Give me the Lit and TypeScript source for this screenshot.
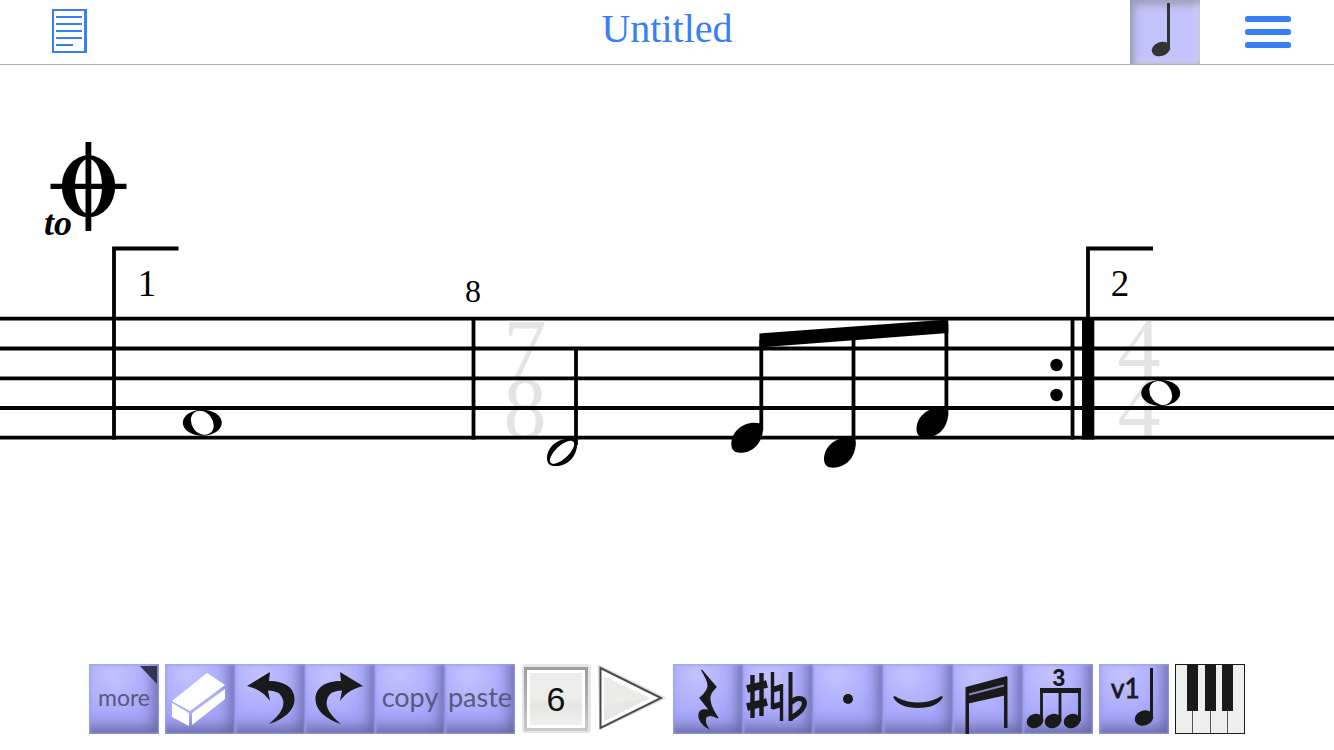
import { LitElement, html, svg, css } from "lit";
import { customElement } from "lit/decorators.js";

const HEAD = "M0 21C0 10 10 0 23 0C27 0 30 .6 31.5 3C33 16 24 30 9 30C3 30 0 27 0 21Z";
const ARROW = "M12 22L35 8L34 17C50 17 60 24 59.5 36C59 46 50 55 34 60C45 51 50 43 48 36C46 29 42 27 33 26.5L35 37C30 30 24 25 12 22Z";

const erase = svg`
  <g fill="#fff">
    <path d="M42 9L60 21L25 47L7 37Z"/>
    <path d="M7 39L24 49V62L7 53Z"/>
    <path d="M27 49L60 25V35L27 61Z"/>
  </g>`;
const undo = svg`<path d=${ARROW}/>`;
const redo = svg`<path transform="translate(70 0) scale(-1 1)" d=${ARROW}/>`;
const rest = svg`<path stroke="#1a1a1a" stroke-width="1.2" d="M28.5 6L43 23C38 28 36 31 37 37C38 42 40 47 45 54C40 51 36 50 33 53C31 57 33 61 35 64C29 61 25 55 26 50C27 45 33 45 37 47L27 34C33 29 36 25 35 20C34 15 31 10 28.5 6Z"/>`;
const accidentals = svg`
  <g fill="none" stroke="#1a1a1a">
    <path stroke-width="4.4" d="M9.5 11V54M18.5 9V52"/>
    <path stroke-width="7.5" d="M4 25L24 20M4 43L24 38"/>
    <path stroke-width="3.4" d="M29.5 8V45M38.5 20V57"/>
    <path stroke-width="6" d="M29 26L39 23M29 43L39 40"/>
    <path stroke-width="4" d="M47.5 8V57"/>
    <path stroke-width="5" d="M48 39C53 33 61 33 61.5 39C61.5 45 55 50 48 54"/>
  </g>`;
const dot = svg`<circle cx="35" cy="35" r="5"/>`;
const slur = svg`<path d="M10 33Q12 31 15 34Q35 43 55 34Q58 31 60 33Q54 44 35 44Q16 44 10 33Z"/>`;
const beams = svg`
  <path d="M13 23L54 12V31L13 40Z"/>
  <path d="M16 30.5L51 21.500" stroke="#8686b4" stroke-width="2"/>
  <path d="M12.5 23H16V70H12.5ZM51 13H54.5V64H51Z"/>`;
const triplet = svg`
  <text x="36" y="22" text-anchor="middle" class="three">3</text>
  <path d="M17 24H58V29H17Z"/>
  <path d="M18.5 26V57M37 26V57M56.5 26V57" stroke="#1a1a1a" stroke-width="2.8"/>
  <ellipse cx="12" cy="57" rx="8.5" ry="7" transform="rotate(-20 12 57)"/>
  <ellipse cx="30" cy="57" rx="8.5" ry="7" transform="rotate(-20 30 57)"/>
  <ellipse cx="49" cy="57" rx="8.5" ry="7" transform="rotate(-20 49 57)"/>`;
const voice = svg`
  <text x="12" y="34" class="voice">v1</text>
  <path d="M51 4H54V54H51Z"/>
  <ellipse cx="45" cy="54" rx="9.500" ry="7.500" transform="rotate(-20 45 54)"/>`;

const icon = (shape: unknown) =>
  html`<svg viewBox="0 0 70 70" fill="#1a1a1a" aria-hidden="true">${shape}</svg>`;

const tile = (label: string, shape: unknown) =>
  html`<button class="tile" aria-label=${label}>${icon(shape)}</button>`;

@customElement("score-sheet")
export class ScoreSheet extends LitElement {
  static styles = css`
    :host { display: block; }
    svg { display: block; width: 100%; height: auto; }
    text { font-family: "Liberation Serif", serif; fill: #000; }
    .meter { font-size: 86px; fill: #e4e4e4; text-anchor: middle; }
    .ending { font-size: 37px; text-anchor: middle; }
    .bar { font-size: 32px; text-anchor: middle; }
    .to { font-size: 36px; font-weight: bold; font-style: italic; }
    .line { fill: none; stroke: #000; stroke-width: 3.8; }
  `;

  private whole(x: number, y: number) {
    return svg`<g transform="translate(${x} ${y})">
      <ellipse rx="19.5" ry="13"/>
      <ellipse rx="13" ry="10.3" fill="#fff" transform="rotate(52)"/>
    </g>`;
  }

  render() {
    return html`<svg viewBox="0 65 1334 583" role="img" aria-label="Score">
      <text class="meter" x="525" y="379">7</text>
      <text class="meter" x="525" y="437">8</text>
      <text class="meter" x="1139" y="378">4</text>
      <text class="meter" x="1139" y="437">4</text>

      <ellipse cx="88.5" cy="186.3" rx="26.7" ry="31"/>
      <ellipse cx="88.5" cy="186.3" rx="13.5" ry="27.5" fill="#fff"/>
      <path d="M85.5 142H91.3V231H85.5ZM50.5 183.7H126.5V189H50.5Z"/>
      <text class="to" x="44" y="235">to</text>

      <path class="line" d="M0 318.7H1334M0 348.5H1334M0 378.3H1334M0 408H1334M0 437.7H1334"/>
      <path class="line" d="M114 439.5V248.5H178.5M1088 320V248.5H1153M473.5 319V439.5M1072.5 319V439.5"/>
      <path d="M1082 319H1094.3V439.5H1082Z"/>
      <circle cx="1056.5" cy="365" r="6.2"/>
      <circle cx="1056.5" cy="395" r="6.2"/>
      <text class="ending" x="147" y="296">1</text>
      <text class="ending" x="1120" y="296">2</text>
      <text class="bar" x="473" y="302">8</text>

      ${this.whole(202.3, 422.8)}
      ${this.whole(1160.7, 393)}

      <path class="line" d="M576 349V445"/>
      <path transform="translate(547 438.8) scale(.95 .91)" d=${HEAD}/>
      <ellipse cx="562" cy="452.3" rx="15.5" ry="6.4" fill="#fff" transform="rotate(-43 562 452.3)"/>

      <path class="line" d="M761.3 340V430M853.5 335V446M946.4 325V416"/>
      <path d="M759.4 333.5L948.3 319.5V333L759.4 347.5Z"/>
      <path transform="translate(731.3 422.8)" d=${HEAD}/>
      <path transform="translate(824 437.8)" d=${HEAD}/>
      <path transform="translate(916.5 407.8)" d=${HEAD}/>
    </svg>`;
  }
}

@customElement("app-root")
export class AppRoot extends LitElement {
  static styles = css`
    :host {
      display: flex;
      flex-direction: column;
      min-height: 100vh;
      background: #fff;
      overflow: hidden;
      font-family: "Liberation Serif", serif;
    }
    button {
      display: block;
      margin: 0;
      padding: 0;
      border: 0;
      background: none;
      flex: none;
      cursor: pointer;
    }
    svg { display: block; width: 100%; height: 100%; }
    header {
      display: grid;
      grid-template-columns: 1fr auto 1fr;
      align-items: center;
      height: 64px;
      padding: 0 43px;
      border-bottom: 1px solid #b0b0b0;
    }
    h1 {
      margin: 0;
      padding-bottom: 6px;
      font-size: 40px;
      line-height: 48px;
      font-weight: normal;
      color: #377ff5;
    }
    .left { padding: 0 0 2px 9px; }
    .pages { width: 35px; height: 44px; }
    .right { display: flex; align-items: center; justify-content: flex-end; gap: 45px; }
    .mode {
      width: 70px;
      height: 64px;
      background: #c3c3fb;
      box-shadow: inset 3px 2px 8px #9494b4, inset -3px -2px 7px #dcdcf8, inset 0 5px 8px #b0b0d4;
    }
    .menu { width: 46px; height: 32px; }
    main { flex: 1; }
    footer {
      display: flex;
      justify-content: center;
      gap: 6px;
      padding-bottom: 16px;
    }
    .group { display: flex; }
    .tile, .key { width: 70px; height: 70px; }
    .tile {
      position: relative;
      background: radial-gradient(circle at 35% 15%, #c2c2ff 0%, #a7a7fb 60%, #a2a2f6 100%);
      box-shadow: inset -1px -1px 2px #9696e0, inset 1px 1px 3px #a0a0f4,
        inset -8px -10px 16px -4px #62629a;
    }
    .word { padding-bottom: 4px; font: 27px/66px "Lato", sans-serif; color: #58587c; text-align: center; white-space: nowrap; }
    .small { font-size: 23px; }
    .corner { position: absolute; top: 2px; right: 2px; width: 17px; height: 18px; }
    .three { font: bold 23px "Liberation Sans", sans-serif; }
    .voice { font: 26px "Lato", sans-serif; stroke: #1a1a1a; stroke-width: 0.8px; }
    .six { font: 34px "Liberation Sans", sans-serif; fill: #111; }
  `;

  render() {
    return html`
      <header>
        <div class="left">
          <button class="pages" aria-label="Documents">
            <svg viewBox="0 0 35 44" fill="#377ff5">
              <path fill-rule="evenodd" d="M0 0H35V44H0ZM2 2V42H32V2Z"/>
              <path d="M4 7H30V9H4ZM4 14H30V16H4ZM4 21H30V23H4ZM4 28H30V30H4ZM4 35H21V37H4Z"/>
            </svg>
          </button>
        </div>
        <h1>Untitled</h1>
        <div class="right">
          <button class="mode" aria-label="Note mode">
            <svg viewBox="0 0 70 64" fill="#333">
              <path d="M37 3H40V47H37Z"/>
              <ellipse cx="31" cy="49" rx="9.5" ry="7" transform="rotate(-20 31 49)"/>
            </svg>
          </button>
          <button class="menu" aria-label="Menu">
            <svg viewBox="0 0 46 32" fill="#377ff5">
              <rect width="46" height="6" rx="2.5"/>
              <rect y="13" width="46" height="6" rx="2.5"/>
              <rect y="26" width="46" height="6" rx="2.5"/>
            </svg>
          </button>
        </div>
      </header>
      <main><score-sheet></score-sheet></main>
      <footer>
        <button class="tile word small">more
          <svg class="corner" viewBox="0 0 17 18"><path d="M0 0H17V18Z" fill="#34344c"/></svg>
        </button>
        <div class="group">
          ${tile("Erase", erase)}${tile("Undo", undo)}${tile("Redo", redo)}
          <button class="tile word">copy</button>
          <button class="tile word">paste</button>
        </div>
        <button class="key">
          ${icon(svg`
            <defs>
              <linearGradient id="rim" x2="0" y2="1"><stop stop-color="#9c9c9c"/><stop offset="1" stop-color="#c8c8c8"/></linearGradient>
              <linearGradient id="face" x2="0" y2="1"><stop stop-color="#ececec"/><stop offset=".5" stop-color="#ededeb"/><stop offset=".6" stop-color="#e5e5e3"/><stop offset="1" stop-color="#f0f0ee"/></linearGradient>
            </defs>
            <rect x="1" y="0" width="69" height="69" rx="3" fill="#e6e6e6"/>
            <rect x="4.5" y="4.5" width="61" height="61" fill="#fff" stroke="url(#rim)" stroke-width="3"/>
            <rect x="9" y="9" width="52" height="52" fill="url(#face)"/>
            <text class="six" x="35" y="47" text-anchor="middle">6</text>`)}
        </button>
        <button class="key" aria-label="Play">
          ${icon(svg`
            <path d="M2 2L67 34L4 64Z" fill="#e2e2e2" stroke="#e2e2e2" stroke-width="3" stroke-linejoin="round"/>
            <path d="M3.5 4L64 34L3.5 64Z" fill="#fff" stroke="#4a4a4a" stroke-width="2"/>
            <path d="M7 12L53 34L7 57Z" fill="#ececea"/>
            <path d="M7 42Q30 37 53 34L7 57Z" fill="#e7e7e5"/>`)}
        </button>
        <div class="group">
          ${tile("Rest", rest)}${tile("Accidentals", accidentals)}${tile("Dot", dot)}${tile("Tie", slur)}${tile("Beam", beams)}${tile("Triplet", triplet)}
        </div>
        <button class="tile">${icon(voice)}</button>
        <button class="key" aria-label="Piano">
          ${icon(svg`
            <rect x=".5" y=".5" width="69" height="69" fill="#eef0ee" stroke="#1a1a1a"/>
            <path d="M17.5 47V69M35.5 47V69M52.5 47V69" stroke="#555"/>
            <path d="M12 1H23V47H12ZM30 1H41V47H30ZM47 1H58V47H47Z"/>`)}
        </button>
      </footer>
    `;
  }
}
